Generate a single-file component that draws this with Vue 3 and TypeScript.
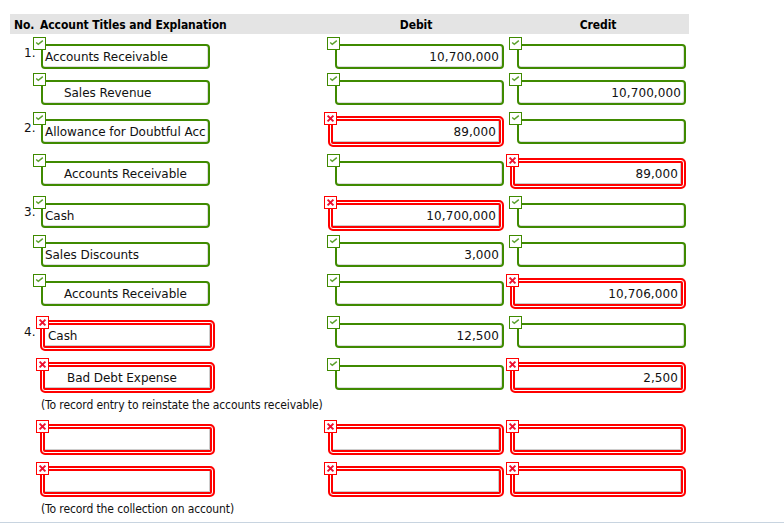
<script setup lang="ts">
type Mark = 'ok' | 'bad'

interface Cell {
  mark: Mark
  text?: string
  indent?: boolean
}

interface Row {
  no?: string
  title: Cell
  debit: Cell
  credit: Cell
  note?: string
}

const ok = (text?: string, indent?: boolean): Cell => ({ mark: 'ok', text, indent })
const bad = (text?: string, indent?: boolean): Cell => ({ mark: 'bad', text, indent })

const rows: Row[] = [
  { no: '1.', title: ok('Accounts Receivable'), debit: ok('10,700,000'), credit: ok() },
  { title: ok('Sales Revenue', true), debit: ok(), credit: ok('10,700,000') },
  { no: '2.', title: ok('Allowance for Doubtful Acc'), debit: bad('89,000'), credit: ok() },
  { title: ok('Accounts Receivable', true), debit: ok(), credit: bad('89,000') },
  { no: '3.', title: ok('Cash'), debit: bad('10,700,000'), credit: ok() },
  { title: ok('Sales Discounts'), debit: ok('3,000'), credit: ok() },
  { title: ok('Accounts Receivable', true), debit: ok(), credit: bad('10,706,000') },
  { no: '4.', title: bad('Cash'), debit: ok('12,500'), credit: ok() },
  {
    title: bad('Bad Debt Expense', true),
    debit: ok(),
    credit: bad('2,500'),
    note: '(To record entry to reinstate the accounts receivable)',
  },
  { title: bad(), debit: bad(), credit: bad() },
  {
    title: bad(),
    debit: bad(),
    credit: bad(),
    note: '(To record the collection on account)',
  },
]
</script>

<template>
  <div class="page">
    <div class="head">
      <span class="head-no">No.</span>
      <span class="col-0 head-title">Account Titles and Explanation</span>
      <span class="col-1 head-num">Debit</span>
      <span class="col-2 head-num">Credit</span>
    </div>

    <template v-for="(row, i) in rows" :key="i">
      <div class="row">
        <span class="no">{{ row.no }}</span>
        <div
          v-for="(cell, c) in [row.title, row.debit, row.credit]"
          :key="c"
          class="cell"
          :class="['col-' + c, cell.mark]"
        >
          <div class="slot">
            <div class="field" :class="{ indent: cell.indent }">{{ cell.text }}</div>
            <span class="badge">
              <svg v-if="cell.mark === 'ok'" width="11" height="11" viewBox="0 0 11 11">
                <path d="M2.2 4.4 L4.3 6.3 L8.8 2.6" fill="none" stroke="#5aa02c" stroke-width="1.4" />
              </svg>
              <svg v-else width="11" height="11" viewBox="0 0 11 11">
                <path d="M2.6 2.6 L8.4 8.4 M8.4 2.6 L2.6 8.4" fill="none" stroke="#ee1030" stroke-width="2" />
              </svg>
            </span>
          </div>
        </div>
      </div>
      <p v-if="row.note" class="note">{{ row.note }}</p>
    </template>

    <div class="rule"></div>
  </div>
</template>

<style scoped>
.page {
  position: relative;
  width: 784px;
  height: 528px;
  overflow: hidden;
  background: #fff;
  padding-top: 14px;
  box-sizing: border-box;
  font-family: "DejaVu Sans", sans-serif;
  font-size: 12px;
  color: #111;
}

.head {
  display: flex;
  align-items: center;
  width: 679px;
  height: 20px;
  padding-top: 1px;
  box-sizing: border-box;
  margin-left: 10px;
  margin-bottom: -1px;
  background: #e4e4e4;
  font-family: "DejaVu Sans Condensed", "DejaVu Sans", sans-serif;
  font-weight: 700;
  color: #000;
  letter-spacing: -0.07px;
}

.head-no {
  width: 30px;
  padding-left: 4px;
  box-sizing: border-box;
}

.head-title {
  white-space: nowrap;
}

.head-num {
  text-align: center;
}

.col-0 {
  width: 176px;
}

.col-1 {
  width: 176px;
  margin-left: 112px;
}

.col-2 {
  width: 176px;
  margin-left: 6px;
}

.row {
  display: flex;
  align-items: center;
  margin-top: 11px;
}

.no {
  width: 40px;
  padding-left: 24px;
  box-sizing: border-box;
  line-height: 14px;
  margin-bottom: 8px;
}

.slot {
  position: relative;
}

.ok .slot {
  width: 169px;
  margin-left: auto;
}

.col-0.ok .slot {
  margin-left: 1px;
}

.bad .slot {
  width: 176px;
}

.col-0.bad .slot {
  width: 175px;
}

.field {
  box-sizing: border-box;
  background: #fff;
  white-space: nowrap;
  overflow: hidden;
}

.col-0 .field {
  letter-spacing: -0.05px;
}

.col-1 .field,
.col-2 .field {
  text-align: right;
  letter-spacing: 0.1px;
}

.ok .field {
  height: 25px;
  line-height: 23px;
  padding: 0 2px;
  border: 2px solid #3f8a00;
  border-radius: 4px;
  box-shadow: inset -1px -1px 0 #ddd;
}

.col-1.ok .field,
.col-2.ok .field {
  padding-right: 3px;
}

.ok .field.indent {
  padding-left: 21px;
}

.bad .field {
  height: 31px;
  line-height: 19px;
  padding: 5px 6px;
  border: 2px solid #f00;
  border-radius: 5px;
  box-shadow: inset 0 0 0 1px #fff, inset 0 0 0 3px #f00, inset -1px -1px 0 3px #ccc;
}

.bad .field.indent {
  padding-left: 25px;
}

.badge {
  position: absolute;
  width: 13px;
  height: 13px;
  box-sizing: border-box;
  background: #fff;
  display: block;
}

.badge svg {
  display: block;
}

.ok .badge {
  left: -8px;
  top: -7px;
  border: 1px solid #3f8a00;
}

.bad .badge {
  left: -4px;
  top: -4px;
  border: 1px solid #f00;
}

.note {
  margin: 4px 0 0 41px;
  line-height: 16px;
  font-family: "DejaVu Sans Condensed", "DejaVu Sans", sans-serif;
  letter-spacing: -0.11px;
}

.rule {
  position: absolute;
  left: 0;
  right: 0;
  top: 522px;
  height: 1px;
  background: #c8d4e0;
}
</style>
